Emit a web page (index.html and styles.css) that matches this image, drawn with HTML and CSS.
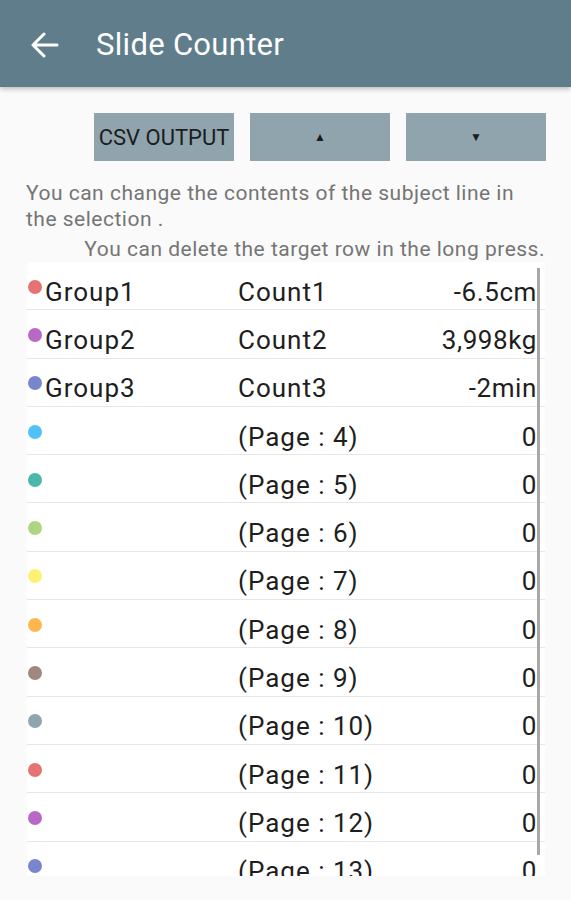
FILE: index.html
```html
<!DOCTYPE html>
<html lang="en">
<head>
  <meta charset="UTF-8">
  <title>Slide Counter</title>
  <link rel="stylesheet" href="styles.css">
</head>
<body>

  <header class="appbar">
    <svg class="back" width="28" height="26" viewBox="0 0 28 26">
      <path d="M2 13 H26 M13 2 L2 13 L13 24" fill="none" stroke="#fff" stroke-width="3" stroke-linecap="round" stroke-linejoin="round"/>
    </svg>
    <span class="title">Slide Counter</span>
  </header>

  <div class="btn-row">
    <button class="tool-btn">CSV OUTPUT</button>
    <button class="tool-btn arrow">▲</button>
    <button class="tool-btn arrow">▼</button>
  </div>

  <p class="hint">You can change the contents of the subject line in the selection .</p>
  <p class="hint hint-right">You can delete the target row in the long press.</p>

  <div class="list-wrap">
    <div class="list">
      <div class="row"><span class="name"><i class="dot red"></i>Group1</span><span class="count">Count1</span><span class="value">-6.5cm</span></div>
      <div class="row"><span class="name"><i class="dot purple"></i>Group2</span><span class="count">Count2</span><span class="value">3,998kg</span></div>
      <div class="row"><span class="name"><i class="dot indigo"></i>Group3</span><span class="count">Count3</span><span class="value">-2min</span></div>
      <div class="row"><span class="name"><i class="dot lightblue"></i></span><span class="count">(Page : 4)</span><span class="value">0</span></div>
      <div class="row"><span class="name"><i class="dot teal"></i></span><span class="count">(Page : 5)</span><span class="value">0</span></div>
      <div class="row"><span class="name"><i class="dot lightgreen"></i></span><span class="count">(Page : 6)</span><span class="value">0</span></div>
      <div class="row"><span class="name"><i class="dot yellow"></i></span><span class="count">(Page : 7)</span><span class="value">0</span></div>
      <div class="row"><span class="name"><i class="dot orange"></i></span><span class="count">(Page : 8)</span><span class="value">0</span></div>
      <div class="row"><span class="name"><i class="dot brown"></i></span><span class="count">(Page : 9)</span><span class="value">0</span></div>
      <div class="row"><span class="name"><i class="dot bluegrey"></i></span><span class="count">(Page : 10)</span><span class="value">0</span></div>
      <div class="row"><span class="name"><i class="dot red"></i></span><span class="count">(Page : 11)</span><span class="value">0</span></div>
      <div class="row"><span class="name"><i class="dot purple"></i></span><span class="count">(Page : 12)</span><span class="value">0</span></div>
      <div class="row"><span class="name"><i class="dot indigo"></i></span><span class="count">(Page : 13)</span><span class="value">0</span></div>
    </div>
    <div class="scrollbar"></div>
  </div>

</body>
</html>
```

FILE: styles.css
```css
body {
  margin: 0;
  padding: 0;
  font-family: Roboto, 'Liberation Sans', sans-serif;
  background: #fafafa;
  color: #1e1e1e;
  height: 900px;
  overflow: hidden;
}

.appbar {
  height: 87px;
  background: #607d8b;
  display: flex;
  align-items: center;
  padding-left: 31px;
  box-shadow: 0 2px 5px rgba(0, 0, 0, 0.25);
}

.back {
  margin-top: 2px;
}

.title {
  margin-left: 37px;
  color: #fff;
  font-size: 31px;
  letter-spacing: 0.3px;
  margin-top: 2px;
}

.btn-row {
  margin-top: 26px;
  padding-right: 25px;
  display: flex;
  justify-content: flex-end;
  gap: 16px;
}

.tool-btn {
  width: 140px;
  height: 48px;
  border: none;
  border-radius: 0;
  background: #90a4ae;
  color: #1c1c1c;
  font-family: Roboto, sans-serif;
  font-size: 22px;
  padding: 0;
}

.tool-btn.arrow {
  font-size: 12px;
}

.hint {
  margin: 19px 26px 0 26px;
  font-size: 21px;
  line-height: 26px;
  letter-spacing: 0.5px;
  color: #757575;
  padding-right: 10px;
}

.hint-right {
  margin-top: 4px;
  margin-right: 26px;
  padding-right: 0;
  text-align: right;
}

.list-wrap {
  position: relative;
  margin: 0 26px 0 27px;
  height: 614px;
  overflow: hidden;
  background: #fff;
}

.row {
  height: 48.3px;
  box-sizing: border-box;
  border-bottom: 1.5px solid #e6e6e6;
  display: grid;
  grid-template-columns: 211px 1fr auto;
  align-items: center;
  padding: 12px 8px 0 0;
  font-size: 26px;
  letter-spacing: 1px;
}

.name {
  display: flex;
  align-items: center;
  height: 100%;
}

.dot {
  width: 14px;
  height: 14px;
  border-radius: 50%;
  margin: 0 3px 10px 1px;
  flex-shrink: 0;
}

.value {
  text-align: right;
  letter-spacing: 0.6px;
}

.red { background: #e57373; }
.purple { background: #ba68c8; }
.indigo { background: #7986cb; }
.lightblue { background: #4fc3f7; }
.teal { background: #4db6ac; }
.lightgreen { background: #aed581; }
.yellow { background: #fff176; }
.orange { background: #ffb74d; }
.brown { background: #a1887f; }
.bluegrey { background: #90a4ae; }

.scrollbar {
  position: absolute;
  top: 6px;
  right: 5px;
  width: 3px;
  height: 587px;
  background: #a8a8a8;
}
```
